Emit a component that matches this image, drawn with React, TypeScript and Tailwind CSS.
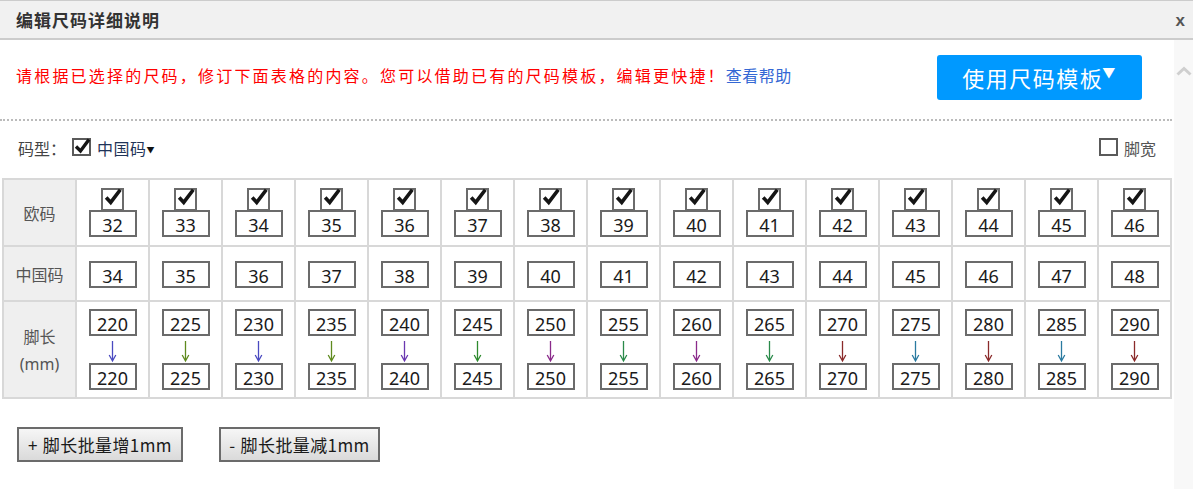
import React from "react";

const eu = Array.from({ length: 15 }, (_, i) => 32 + i);
const cn = Array.from({ length: 15 }, (_, i) => 34 + i);
const len = Array.from({ length: 15 }, (_, i) => 220 + i * 5);
const arrowColors = [
  "#4a4ac0", "#5f8a1e", "#4a4ac0", "#5f8a1e", "#6a38b0",
  "#2e8a2e", "#8a2a8a", "#2a8a4a", "#8a2a8a", "#2a8a4a",
  "#8a2a2a", "#2a7aa0", "#8a2a2a", "#2a7aa0", "#8a2a2a",
];

function CheckMark({ size = 22 }: { size?: number }) {
  return (
    <svg width={size} height={size} viewBox="0 0 22 22" className="absolute left-[0px] top-[-3px] overflow-visible">
      <path d="M3.5 11.5 L8.5 17 L19 3" fill="none" stroke="#151515" strokeWidth="4" strokeLinecap="butt" strokeLinejoin="miter" />
    </svg>
  );
}

function Arrow({ color }: { color: string }) {
  return (
    <svg width="9" height="27" viewBox="0 0 9 27">
      <path d="M4.5 5 V25 M1.2 19 L4.5 25 L7.8 19" fill="none" stroke={color} strokeWidth="1.3" />
    </svg>
  );
}

function Box({ value }: { value: number }) {
  return (
    <div className="w-[48px] h-[27px] border-2 border-[#6b6b6b] bg-white flex items-center justify-center pt-[2px] text-[18px] leading-none text-[#1a1a1a] font-['Noto_Sans','Noto_Sans_CJK_SC',sans-serif]">
      {value}
    </div>
  );
}

export default function App() {
  return (
    <div className="w-[1193px] h-[489px] overflow-hidden bg-white font-['Noto_Sans_CJK_SC',sans-serif] text-[#333]">
      {/* header */}
      <div className="h-[40px] bg-[#f1f1f1] border-t border-t-[#ccc] border-b-2 border-b-[#ccc] flex items-center justify-between pl-[16px] pr-[8px]">
        <span className="text-[17px] font-bold text-[#333] tracking-[1px]">编辑尺码详细说明</span>
        <span className="text-[17px] font-bold text-[#555] font-['Liberation_Sans',sans-serif] mt-[3px]">x</span>
      </div>
      <div className="flex h-[449px]">
        <div className="w-[1174px]">
          <div className="flex items-center justify-between pl-[16px] pr-[32px] pt-[15px] pb-[19px]">
            <p className="text-[16px] text-[#ff0000] tracking-[2.2px] -mt-[5px]">
              请根据已选择的尺码，修订下面表格的内容。您可以借助已有的尺码模板，编辑更快捷！
              <a className="text-[#3468d4] tracking-[0.5px]">查看帮助</a>
            </p>
            <button className="w-[205px] h-[45px] rounded-[3px] bg-[#0099ff] text-white text-[22px] tracking-[1.5px] flex items-center justify-center pb-[1px]">
              使用尺码模板<span className="text-[13px] -ml-[1px] -mt-[10px]">▼</span>
            </button>
          </div>
          <div className="w-[1172px] border-t-2 border-dotted border-t-[#bbb]" />
          <div className="pt-[17px] pb-[20px] pl-[18px] pr-[18px]">
            <div className="h-[20px] flex items-center justify-between">
              <div className="flex items-center text-[16px]">
                <span className="text-[#444]">码型：</span>
                <span className="relative w-[19px] h-[18px] border-2 border-[#5a5a5a] bg-white ml-[6px] mt-[-3px]">
                  <svg width="18" height="18" viewBox="0 0 18 18" className="absolute left-[-1px] top-[-3px] overflow-visible">
                    <path d="M3 9.5 L7.5 14 L16 2.5" fill="none" stroke="#151515" strokeWidth="3.4" />
                  </svg>
                </span>
                <span className="ml-[6px] text-[#1f3458] tracking-[0.5px]">中国码</span>
                <span className="text-[8px] text-[#111] mt-[4px]">▼</span>
              </div>
              <div className="flex items-center text-[16px]">
                <span className="w-[19px] h-[18px] border-2 border-[#5a5a5a] bg-white mt-[-3px]" />
                <span className="ml-[6px] text-[#555]">脚宽</span>
              </div>
            </div>
          </div>
          {/* table */}
          <div className="ml-[2px] w-[1170px] grid grid-cols-[repeat(16,71px)] grid-rows-[65px_53px_95px] gap-[2px] p-[2px] bg-[#d8d8d8]">
            <div className="bg-[#efefef] flex items-center justify-center text-[16px] text-[#555]">欧码</div>
            {eu.map((v) => (
              <div key={"e" + v} className="bg-white flex flex-col items-center justify-center">
                <div className="relative w-[23px] h-[23px] border-2 border-[#6b6b6b] bg-white -mb-[1px]">
                  <CheckMark size={20} />
                </div>
                <Box value={v} />
              </div>
            ))}
            <div className="bg-[#efefef] flex items-center justify-center text-[16px] text-[#555]">中国码</div>
            {cn.map((v) => (
              <div key={"c" + v} className="bg-white flex items-center justify-center pt-[2px]">
                <Box value={v} />
              </div>
            ))}
            <div className="bg-[#efefef] flex flex-col items-center justify-center text-[16px] text-[#555] leading-[28px]">
              <span>脚长</span>
              <span className="font-['Noto_Sans',sans-serif]">(mm)</span>
            </div>
            {len.map((v, i) => (
              <div key={"l" + v} className="bg-white flex flex-col items-center justify-center">
                <Box value={v} />
                <Arrow color={arrowColors[i]} />
                <Box value={v} />
              </div>
            ))}
          </div>
          {/* buttons */}
          <div className="flex gap-[36px] pl-[17px] mt-[28px]">
            <button className="w-[166px] h-[35px] border-2 border-[#6b6b6b] bg-gradient-to-b from-[#f6f6f6] to-[#dadada] text-[17px] text-[#1a1a1a] tracking-[0.4px] flex items-center justify-center">
              <span className="mr-[5px]">+</span>脚长批量增1mm
            </button>
            <button className="w-[161px] h-[35px] border-2 border-[#6b6b6b] bg-gradient-to-b from-[#f6f6f6] to-[#dadada] text-[17px] text-[#1a1a1a] tracking-[0.4px] flex items-center justify-center">
              <span className="mr-[5px]">-</span>脚长批量减1mm
            </button>
          </div>
        </div>
        <div className="flex-1 bg-[#f8f8f8] flex justify-center pt-[26px]">
          <svg width="16" height="10" viewBox="0 0 16 10">
            <path d="M1.5 8.5 L8 2.5 L14.5 8.5" fill="none" stroke="#cfcfcf" strokeWidth="3" />
          </svg>
        </div>
      </div>
    </div>
  );
}
